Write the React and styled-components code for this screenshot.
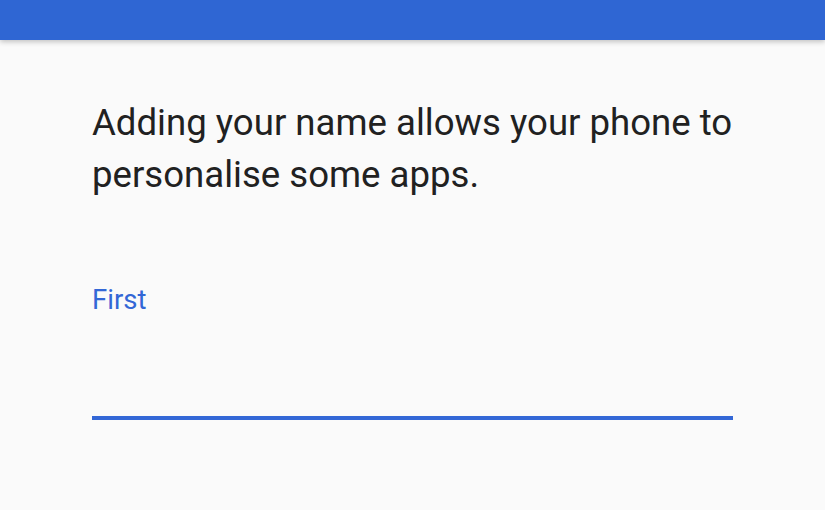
import React from 'react';
import styled, { createGlobalStyle } from 'styled-components';

const GlobalStyle = createGlobalStyle`
    html, body {
        margin: 0;
        padding: 0;
        background: #fafafa;
    }
    body {
        font-family: Roboto, "Noto Sans", sans-serif;
    }
`

const Page = styled.div`
    width: 825px;
    height: 510px;
    overflow: hidden;
    background: #fafafa;
    display: flex;
    flex-direction: column;
`

const TopBar = styled.div`
    height: 40px;
    flex-shrink: 0;
    background: #2f66d3;
    box-shadow: 0 2px 5px rgba(0, 0, 0, 0.22);
    position: relative;
    z-index: 1;
`

const Content = styled.div`
    padding: 57px 92px 0 92px;
    display: flex;
    flex-direction: column;
`

const Intro = styled.p`
    margin: 0;
    width: 680px;
    font-size: 36.6px;
    line-height: 52px;
    color: #212121;
    letter-spacing: 0;
`

const Field = styled.div`
    margin-top: 82px;
    width: 641px;
    display: flex;
    flex-direction: column;
`

const Label = styled.label`
    font-size: 27.5px;
    line-height: 34px;
    color: #3367d6;
`

const Input = styled.input`
    border: none;
    border-bottom: 4px solid ${p => p.$focused ? '#3367d6' : '#9e9e9e'};
    background: transparent;
    outline: none;
    height: 99px;
    padding: 0;
    font-family: inherit;
    font-size: 30px;
    color: #212121;
`

const App = () => {
    return (
        <Page>
            <GlobalStyle />
            <TopBar />
            <Content>
                <Intro>Adding your name allows your phone to personalise some apps.</Intro>
                <Field>
                    <Label>First</Label>
                    <Input type='text' $focused />
                </Field>
            </Content>
        </Page>
    )
}

export default App;
